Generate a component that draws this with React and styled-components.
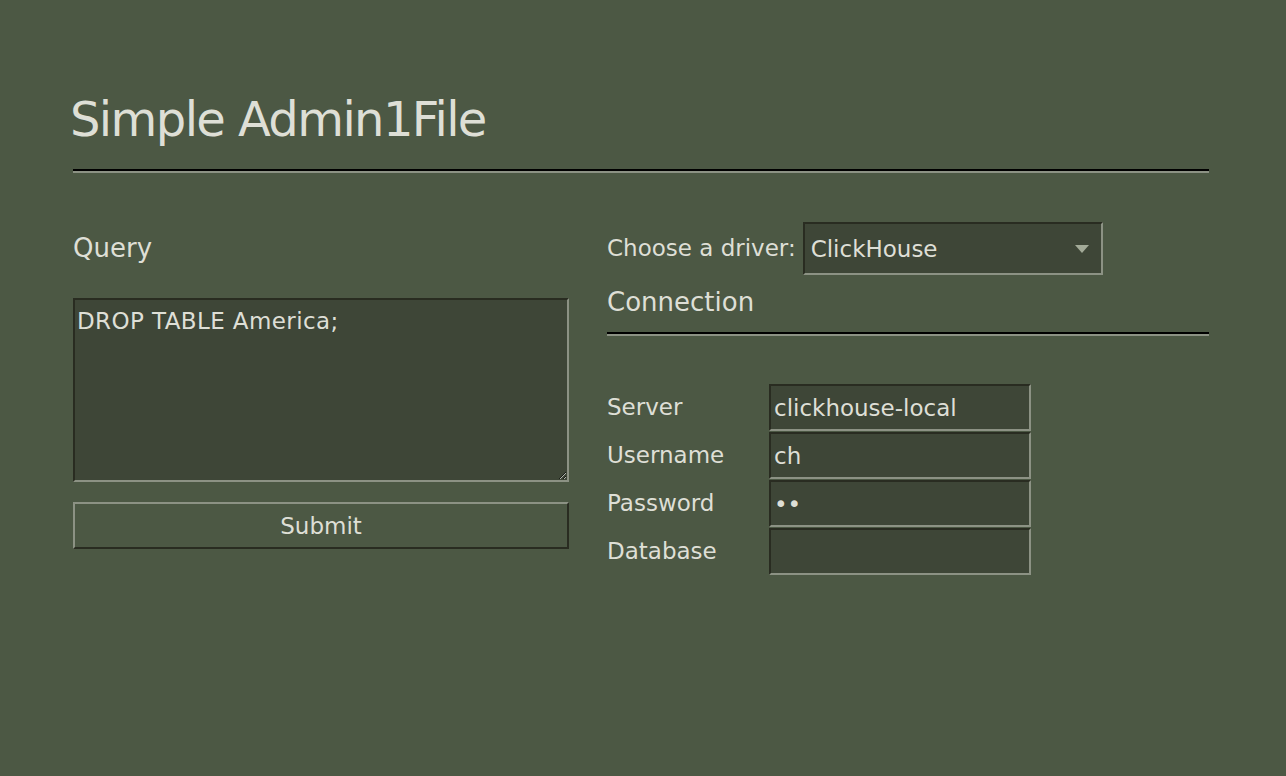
import React from "react";
import styled, { createGlobalStyle } from "styled-components";

const GlobalStyle = createGlobalStyle`
    html, body {
        margin: 0;
        padding: 0;
        background-color: #4c5844;
    }
    body {
        font-family: "DejaVu Sans", "Liberation Sans", sans-serif;
        color: #dedfd6;
    }
`;

const Page = styled.div`
    width: 1136px;
    padding: 95px 0 0 73px;
`;

const Title = styled.h1`
    margin: 0 0 26px -3px;
    font-size: 48px;
    font-weight: normal;
    line-height: 1;
    letter-spacing: -1.6px;
    color: #dedfd6;
`;

const Rule = styled.div`
    height: 0;
    border-top: 2px solid #000;
    border-bottom: 2px solid #8c9284;
`;

const Columns = styled.div`
    display: grid;
    grid-template-columns: 496px 602px;
    column-gap: 38px;
    margin-top: 49px;
`;

const Column = styled.div`
    display: flex;
    flex-direction: column;
`;

const Heading = styled.div`
    font-size: 26px;
    line-height: 1;
    margin-top: ${(p) => p.$top || 0}px;
    margin-bottom: ${(p) => p.$bottom || 0}px;
`;

const sunken = `
    border-style: solid;
    border-width: 2px;
    border-color: #292c21 #8c9284 #8c9284 #292c21;
    background-color: #3e4637;
    color: #dedfd6;
    font-family: "DejaVu Sans", "Liberation Sans", sans-serif;
    font-size: 23px;
    outline: none;
    box-sizing: border-box;
`;

const QueryBox = styled.textarea`
    ${sunken}
    width: 496px;
    height: 184px;
    padding: 10px 2px;
    line-height: 1;
    letter-spacing: 0.4px;
    margin: 0;
`;

const SubmitButton = styled.button`
    margin-top: 20px;
    width: 496px;
    height: 47px;
    border-style: solid;
    border-width: 2px;
    border-color: #8c9284 #292c21 #292c21 #8c9284;
    background-color: #4c5844;
    color: #dedfd6;
    font-family: "DejaVu Sans", "Liberation Sans", sans-serif;
    font-size: 23px;
    cursor: pointer;
`;

const DriverRow = styled.div`
    display: flex;
    align-items: center;
    gap: 7px;
`;

const Label = styled.label`
    font-size: 23px;
    line-height: 1;
`;

const SelectWrap = styled.div`
    position: relative;
    width: 300px;
    height: 53px;
`;

const Select = styled.select`
    ${sunken}
    appearance: none;
    width: 100%;
    height: 100%;
    padding: 0 6px;
`;

const Arrow = styled.svg`
    position: absolute;
    right: 14px;
    top: 23px;
    pointer-events: none;
`;

const FormGrid = styled.div`
    display: grid;
    grid-template-columns: 162px 262px;
    row-gap: 1px;
    align-items: center;
    margin-top: 48px;
`;

const Field = styled.input`
    ${sunken}
    width: 262px;
    height: 47px;
    padding: 0 3px;
`;

const fields = [
    { label: "Server", type: "text", value: "clickhouse-local" },
    { label: "Username", type: "text", value: "ch" },
    { label: "Password", type: "password", value: "ch" },
    { label: "Database", type: "text", value: "" },
];

const App = () => {
    return (
        <>
            <GlobalStyle />
            <Page>
                <Title>Simple Admin1File</Title>
                <Rule />
                <Columns>
                    <Column>
                        <Heading $top={13} $bottom={37}>Query</Heading>
                        <QueryBox defaultValue="DROP TABLE America;" />
                        <SubmitButton>Submit</SubmitButton>
                    </Column>
                    <Column>
                        <DriverRow>
                            <Label>Choose a driver:</Label>
                            <SelectWrap>
                                <Select defaultValue="clickhouse">
                                    <option value="clickhouse">ClickHouse</option>
                                    <option value="postgres">PostgreSQL</option>
                                    <option value="mysql">MySQL</option>
                                </Select>
                                <Arrow width="14" height="8" viewBox="0 0 14 8">
                                    <polygon points="0,0 14,0 7,8" fill="#a3ab98" />
                                </Arrow>
                            </SelectWrap>
                        </DriverRow>
                        <Heading $top={14} $bottom={17}>Connection</Heading>
                        <Rule />
                        <FormGrid>
                            {fields.map((f) => (
                                <React.Fragment key={f.label}>
                                    <Label>{f.label}</Label>
                                    <Field type={f.type} defaultValue={f.value} />
                                </React.Fragment>
                            ))}
                        </FormGrid>
                    </Column>
                </Columns>
            </Page>
        </>
    );
};

export default App;
